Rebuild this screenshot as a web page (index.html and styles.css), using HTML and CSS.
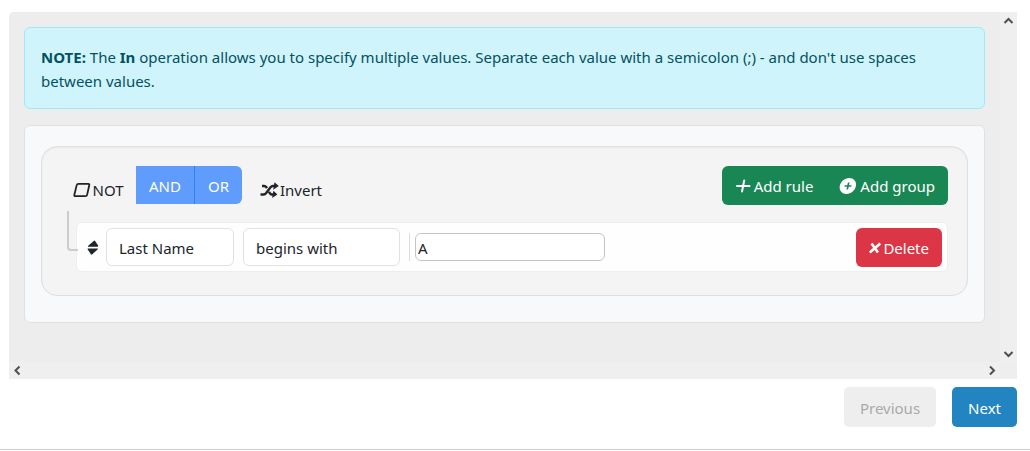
FILE: index.html
```html
<!DOCTYPE html>
<html lang="en">
<head>
<meta charset="utf-8">
<title>Query filter</title>
<link rel="stylesheet" href="styles.css">
</head>
<body>
<main class="wizard">
  <div class="panel">
    <div class="content">
      <p class="alert"><strong>NOTE:</strong> The <strong>In</strong> operation allows you to specify multiple values. Separate each value with a semicolon (;) - and don't use spaces between values.</p>
      <section class="card">
        <div class="group">
          <div class="group-header">
            <button type="button" class="plain not"><svg class="icon" width="18" height="16" viewBox="0 0 18 16"><path d="M5.400 1.800h9.800q1.400 0 1.100 1.200L14.100 12.900q-.3 1.300-1.700 1.300H2.400q-1.400 0-1.100-1.200L3.700 3.100q.3-1.300 1.700-1.300Z" fill="none" stroke="currentColor" stroke-width="1.800"/></svg>NOT</button>
            <div class="conditions" role="radiogroup" aria-label="Condition">
              <label class="condition"><input type="radio" name="condition">AND</label>
              <label class="condition"><input type="radio" name="condition">OR</label>
            </div>
            <button type="button" class="plain"><svg class="icon" width="19" height="16" viewBox="0 0 19 16"><path d="M.5 12.500h3.200Q5 12.500 6 11.300L10.500 5.200Q11.500 4 12.800 4h2.200M2 4h2.200q1.300 0 2 1l.8 1.200M9 9.800l1.100 1.700q.7 1 2 1h1.500" fill="none" stroke="currentColor" stroke-width="2.400"/><path d="M14.500 .3 18.800 4l-5.600 3.700ZM13.400 8.800l4 3.700-5.300 3.500Z" fill="currentColor"/></svg>Invert</button>
            <div class="actions">
              <button type="button" class="action"><svg class="icon" width="16" height="16" viewBox="0 0 16 16"><path d="M2 8h12.500M9.200 2.500 7 13.500" fill="none" stroke="currentColor" stroke-width="2" stroke-linecap="round"/></svg>Add rule</button>
              <button type="button" class="action"><svg class="icon" width="18" height="16" viewBox="0 0 18 16"><path fill="currentColor" fill-rule="evenodd" d="M10.300 0C14.500 0 17.600 3.200 17 7.500 16.300 12.400 12.300 16 7.500 16 3.200 16 .2 12.800.7 8.500 1.300 3.700 5.500 0 10.300 0ZM8.900 4.500 8.300 7.200H5.700L5.400 8.800h2.600l-.6 2.700h1.700l.6-2.700h2.600l.3-1.600H10l.6-2.700Z"/></svg>Add group</button>
            </div>
          </div>
          <div class="rule">
            <button type="button" class="handle" aria-label="Move rule"><svg width="12" height="15" viewBox="0 0 12 15"><path fill="currentColor" d="M7 .8q.7-.6 1.100.1l3 4.700q.6 1.100-.7 1.100H1.500Q.2 6.700 1.200 5.700ZM1.300 8.500h9q1.300 0 .3 1.100l-5.600 4.800q-.7.600-1.100-.1L.7 9.600Q.1 8.500 1.300 8.500Z"/></svg></button>
            <select class="field" aria-label="Field"><option>Last Name</option></select>
            <select class="field operator" aria-label="Operator"><option>begins with</option></select>
            <div class="value"><input class="value-input" type="text" value="A" aria-label="Value"></div>
            <button type="button" class="delete"><svg class="icon" width="14" height="12" viewBox="0 0 14 12"><path d="M3.500 1.500 10 10.500M12.300 1.500 1.700 10.500" fill="none" stroke="currentColor" stroke-width="2.600"/></svg>Delete</button>
          </div>
        </div>
      </section>
    </div>
    <div class="bar bar-vertical">
      <button type="button" class="arrow" aria-label="Scroll up"><svg width="11" height="8" viewBox="0 0 11 8"><path d="M1.500 6l4-4 4 4"/></svg></button>
      <button type="button" class="arrow" aria-label="Scroll down"><svg width="11" height="8" viewBox="0 0 11 8"><path d="M1.500 2l4 4 4-4"/></svg></button>
    </div>
    <div class="bar bar-horizontal">
      <button type="button" class="arrow" aria-label="Scroll left"><svg width="8" height="11" viewBox="0 0 8 11"><path d="M5.500 1.500l-4 4 4 4"/></svg></button>
      <button type="button" class="arrow" aria-label="Scroll right"><svg width="8" height="11" viewBox="0 0 8 11"><path d="M2 1.500l4 4-4 4"/></svg></button>
    </div>
  </div>
  <nav class="steps" aria-label="Steps">
    <button type="button" class="step" disabled>Previous</button>
    <button type="button" class="step next">Next</button>
  </nav>
</main>
</body>
</html>
```
FILE: styles.css
```css
* {
  box-sizing: border-box;
}

body {
  margin: 0;
  background: #fff;
  color: #212529;
  font: 15px/24px "Noto Sans", "Open Sans", sans-serif;
}

button,
input,
select {
  margin: 0;
  font: inherit;
  color: inherit;
}

button {
  display: flex;
  align-items: center;
  justify-content: center;
  border: 0;
  background: none;
  white-space: nowrap;
}

svg {
  flex: none;
}

.wizard {
  padding: 12px 0 22px;
  border-bottom: 1px solid #ccc;
}

.panel {
  display: grid;
  grid-template-columns: 1fr 17px;
  margin: 0 13px 0 9px;
  border-radius: 5px 0 0 0;
  background: #eee;
  overflow: hidden;
}

.content {
  padding: 15px 15px 39px;
  background: #ededed;
}

.alert {
  margin: 0 0 16px;
  padding: 17px 16px 15px;
  border: 1px solid #9eeaf9;
  border-radius: 6px;
  background: #cff4fc;
  color: #055160;
}

.card {
  padding: 20px 16px 26px;
  border: 1px solid #dee2e6;
  border-radius: 6px;
  background: #f8f9fb;
}

.group {
  padding: 19px 19px 23px 35px;
  border: 1px solid #dfdfdf;
  border-radius: 16px;
  background: #f4f4f4;
  box-shadow: inset 0 1px 2px #0000000d;
}

.group-header {
  display: flex;
  align-items: flex-start;
  margin-left: -4px;
}

.icon {
  margin-right: 1px;
}

.plain {
  height: 48px;
  padding: 0;
}

.not {
  width: 51px;
}

.conditions {
  display: flex;
  margin: 0 18px 0 12px;
  border-radius: 0 6px 6px 0;
  background: #5f9cfb;
  color: #fff;
}

.condition {
  position: relative;
  padding: 8px 13px 6px;
}

.condition + .condition {
  border-left: 1px solid #2f80fa;
}

.condition input {
  position: absolute;
  inset: 0;
  opacity: 0;
}

.actions {
  display: flex;
  margin-left: auto;
  border-radius: 6px;
  background: #198754;
  color: #fff;
}

.action {
  gap: 2px;
  height: 39px;
  padding: 0 13px;
}

.rule {
  position: relative;
  display: flex;
  align-items: center;
  height: 50px;
  margin: 8px 0 0 -1px;
  padding: 0 5px 0 10px;
  border: 1px solid #eee;
  border-radius: 6px;
  background: #fefefe;
}

.rule::before {
  content: "";
  position: absolute;
  left: -10px;
  top: -12px;
  width: 9px;
  height: 38px;
  border: solid #ccc;
  border-width: 0 0 2px 2px;
  border-radius: 0 0 0 4px;
}

.handle {
  margin-right: 7px;
  padding: 0;
}

.field {
  appearance: none;
  width: 128px;
  height: 38px;
  margin-right: 9px;
  padding: 2px 12px 0;
  border: 1px solid #dee2e6;
  border-radius: 6px;
  background: #fff;
}

.operator {
  width: 157px;
}

.value {
  padding-left: 5px;
  border-left: 1px solid #ddd;
}

.value-input {
  display: block;
  width: 190px;
  height: 28px;
  padding: 2px 2px 0;
  border: 1px solid #c4c4c4;
  border-radius: 6px;
  background: #fff;
}

.delete {
  height: 39px;
  margin-left: auto;
  padding: 2px 13px 0 12px;
  border-radius: 6px;
  background: #dc3545;
  color: #fff;
}

.bar {
  display: flex;
  justify-content: space-between;
  background: #efefef;
}

.bar-vertical {
  flex-direction: column;
}

.bar-horizontal {
  height: 17px;
}

.arrow {
  width: 17px;
  height: 17px;
  padding: 0;
}

.arrow path {
  fill: none;
  stroke: #505050;
  stroke-width: 2;
}

.steps {
  display: flex;
  justify-content: flex-end;
  gap: 16px;
  padding: 8px 13px 0;
}

.step {
  height: 40px;
  padding: 2px 16px 0;
  border-radius: 5px;
  background: #eee;
  color: #aaa;
}

.next {
  background: #2284c1;
  color: #fff;
}
```
